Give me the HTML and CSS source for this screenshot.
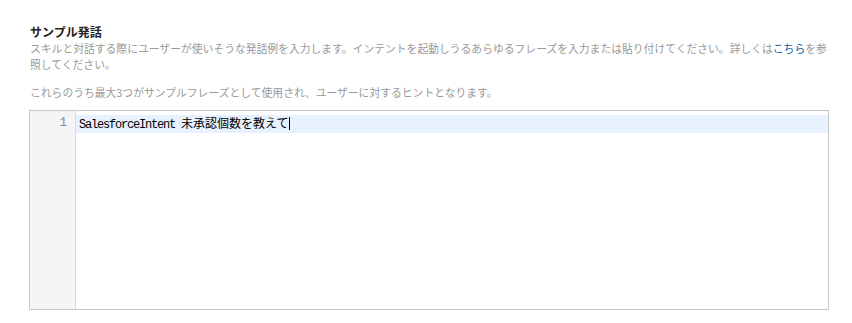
FILE: index.html
```html
<!DOCTYPE html>
<html lang='ja'>
<head>
  <meta charset='UTF-8'>
  <title>サンプル発話</title>
  <link rel="stylesheet" href="styles.css">
</head>
<body>
  <div class='field'>
    <h3 class='field-title'>サンプル発話</h3>
    <p class='field-desc'>スキルと対話する際にユーザーが使いそうな発話例を入力します。インテントを起動しうるあらゆるフレーズを入力または貼り付けてください。詳しくは<a href='#'>こちら</a>を参照してください。</p>
    <p class='field-desc note'>これらのうち最大3つがサンプルフレーズとして使用され、ユーザーに対するヒントとなります。</p>
    <div class='editor'>
      <div class='gutter'>
        <div class='line-no'>1</div>
      </div>
      <div class='code'>
        <div class='line active'><span class='latin'>SalesforceIntent </span><span class='ja'>未承認個数を教えて</span><span class='cursor'></span></div>
      </div>
    </div>
  </div>
</body>
</html>
```

FILE: styles.css
```css
body {
  background-color: #fff;
  margin: 0;
  font-family: "Noto Sans CJK JP", "Noto Sans", sans-serif;
}

.field {
  width: 800px;
  padding: 24px 0 0 29px;
}

.field-title {
  font-size: 12px;
  font-weight: bold;
  line-height: 16px;
  color: #222;
  margin: 0;
  padding-left: 1px;
}

.field-desc {
  font-size: 10.8px;
  line-height: 16px;
  color: #999;
  margin: 0;
  padding-left: 1px;
}

.field-desc a {
  color: #0b5cad;
  text-decoration: none;
}

.field-desc.note {
  margin-top: 12px;
}

.editor {
  margin-top: 10px;
  height: 198px;
  border: 1px solid #c8c8c8;
  display: flex;
}

.gutter {
  width: 45px;
  background: #f5f5f5;
  border-right: 1px solid #ddd;
  padding-top: 4px;
}

.line-no {
  font-family: "Liberation Mono", monospace;
  font-size: 12px;
  line-height: 16px;
  color: #888;
  text-align: right;
  padding-right: 8px;
}

.code {
  flex: 1;
  padding-top: 4px;
}

.line {
  font-family: "Liberation Mono", "Noto Sans CJK JP", monospace;
  font-size: 12px;
  line-height: 16px;
  color: #000;
  padding-left: 3px;
  white-space: pre;
}

.line.active {
  background: #e8f2fe;
}

.latin {
  letter-spacing: -1.2px;
}

.ja {
  font-family: "Noto Sans CJK JP", sans-serif;
}

.cursor {
  display: inline-block;
  width: 1px;
  height: 13px;
  background: #000;
  margin-left: 1px;
  vertical-align: -2px;
}
```
